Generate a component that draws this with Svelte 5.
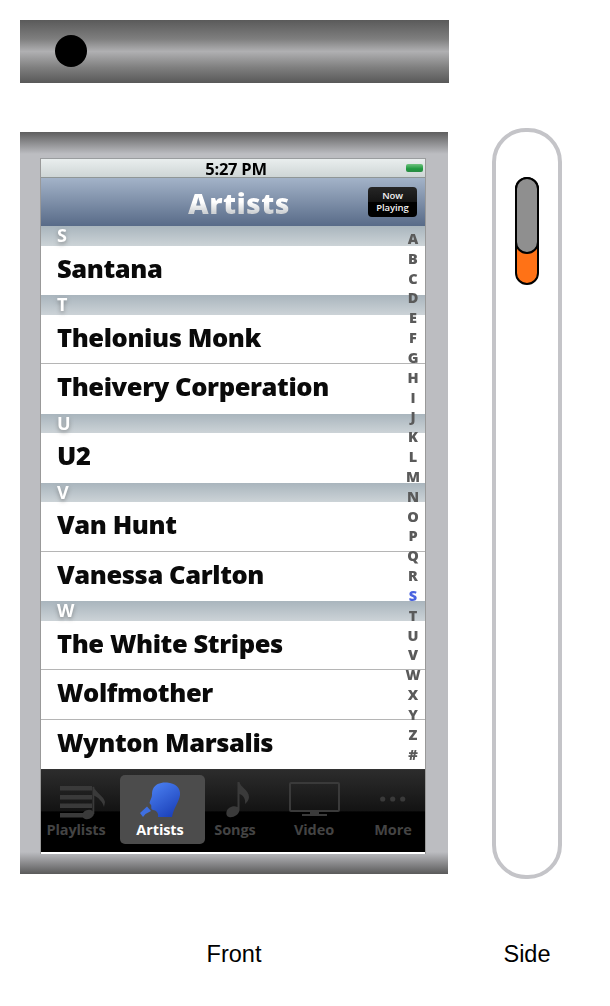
<script>
  const sections = [
    { l: 'S', rows: ['Santana'] },
    { l: 'T', rows: ['Thelonius Monk', 'Theivery Corperation'] },
    { l: 'U', rows: ['U2'] },
    { l: 'V', rows: ['Van Hunt', 'Vanessa Carlton'] },
    { l: 'W', rows: ['The White Stripes', 'Wolfmother', 'Wynton Marsalis'] }
  ];
  const index = 'ABCDEFGHIJKLMNOPQRSTUVWXYZ#'.split('');
</script>

<div class="page">
  <div class="top-edge"><span class="hole"></span></div>

  <div class="front">
    <div class="metal upper"></div>
    <div class="screen">
      <div class="status"><span>5:27 PM</span><i class="battery"></i></div>
      <div class="nav">
        <span class="title">Artists</span>
        <span class="now">Now<br />Playing</span>
      </div>
      <div class="list">
        {#each sections as s}
          <div class="head"><span>{s.l}</span></div>
          {#each s.rows as r, i}
            <div class="row" class:ruled={i < s.rows.length - 1}>{r}</div>
          {/each}
        {/each}
        <div class="index">
          {#each index as c}
            <span class:on={c === 'S'}>{c}</span>
          {/each}
        </div>
      </div>
      <div class="tabs">
        <div class="tab t1">
          <svg width="66" height="40" viewBox="0 0 66 40">
            <g fill="#3a3a3a">
              <rect x="17" y="6" width="32" height="4.5" />
              <rect x="17" y="15" width="32" height="4.5" />
              <rect x="17" y="23.5" width="32" height="4.5" />
              <rect x="17" y="33" width="24" height="4.5" />
              <ellipse cx="45" cy="34.5" rx="6" ry="4.5" transform="rotate(-20 45 34.5)" />
              <rect x="49.5" y="7" width="1.8" height="27" />
              <path d="M50 6 C53 13 61 16 62 22 L61 27 C60 22 55 17 50 15 Z" />
            </g>
          </svg>
          <b>Playlists</b>
        </div>
        <div class="tab t2">
          <svg width="46" height="40" viewBox="0 0 46 40">
            <defs>
              <linearGradient id="blue" x1="0.2" y1="0" x2="0.8" y2="1">
                <stop offset="0" stop-color="#4a7ff0" />
                <stop offset="1" stop-color="#1a3fb8" />
              </linearGradient>
            </defs>
            <path fill="url(#blue)" d="M16 9 C18 4 24 2 30 2.5 C38 3 44 8 43 15 C42 22 37 27 35 37 L21 37 C22 33 19 30 16 30 C13 29 15 26 14 25 L12.5 23 C13 20 15 18 15 15 C15 13 15 11 16 9 Z" />
            <path fill="#3f6fe0" d="M3 33 L10 26.5 L14 31 L8.5 34 L6 37 Z" />
          </svg>
          <b>Artists</b>
        </div>
        <div class="tab t3">
          <svg width="40" height="40" viewBox="0 0 40 40">
            <path fill="#3a3a3a" d="M22.5 2 L24.5 2 C25 7 34 10 34 17 C34 20 32 22 30 24 C31 19 28 15 24.5 14 L24.5 30 C24 35 18 38 14 37 C10 36 11 30 14 28 C17 26 20 26 22.5 27 Z" />
          </svg>
          <b>Songs</b>
        </div>
        <div class="tab t4">
          <svg width="54" height="40" viewBox="0 0 54 40">
            <rect x="3" y="3" width="49" height="28" rx="1" fill="none" stroke="#3a3a3a" stroke-width="2" />
            <path fill="#3a3a3a" d="M23 32 H32 V34 H40 V36 H15 V34 H23 Z" />
          </svg>
          <b>Video</b>
        </div>
        <div class="tab t5">
          <svg width="30" height="40" viewBox="0 0 30 40">
            <g fill="#3a3a3a">
              <circle cx="4.7" cy="19" r="2.6" />
              <circle cx="14.7" cy="19" r="2.6" />
              <circle cx="24.7" cy="19" r="2.6" />
            </g>
          </svg>
          <b>More</b>
        </div>
      </div>
    </div>
    <div class="metal lower"></div>
  </div>

  <div class="side">
    <div class="slider"><div class="thumb"></div></div>
  </div>

  <div class="label">Front</div>
  <div class="label">Side</div>
</div>

<style>
  :global(body) { margin: 0; background: #fff; }
  .page {
    width: 610px;
    height: 1006px;
    box-sizing: border-box;
    padding: 20px 0 0 20px;
    display: grid;
    grid-template-columns: 428px 70px;
    grid-template-rows: 63px 742px auto;
    column-gap: 44px;
    row-gap: 49px;
    font-family: "Liberation Sans", Arial, sans-serif;
    overflow: hidden;
  }
  .top-edge {
    grid-column: 1 / 3;
    width: 429px;
    height: 63px;
    box-sizing: border-box;
    padding: 15px 0 0 35px;
    background: linear-gradient(#5a5a5a 0%, #7e7e7e 30%, #b0b0b2 50%, #808080 75%, #585858 100%);
  }
  .hole {
    display: block;
    width: 32px;
    height: 32px;
    border-radius: 50%;
    background: #000;
  }
  .front {
    display: flex;
    flex-direction: column;
    background: #bcbdc1;
    align-items: flex-start;
  }
  .metal { height: 22px; width: 100%; flex: none; }
  .upper { background: linear-gradient(#5e5e5e, #bcbdc1); }
  .lower { background: linear-gradient(#bcbdc1, #5a5a5a); }
  .screen {
    margin: 4px 0 -2px 20px;
    width: 386px;
    height: 696px;
    box-sizing: border-box;
    border: 1px solid #999;
    border-bottom: 0;
    border-top: 1px solid #9a9d9f;
    display: flex;
    flex-direction: column;
    background: #fff;
    filter: blur(0.35px);
  }
  .status {
    flex: none;
    height: 19px;
    position: relative;
    text-align: center;
    font: 700 16.5px/20px "Open Sans", sans-serif;
    letter-spacing: -0.25px;
    color: #000;
    background: linear-gradient(#e9eeee, #cdd4d4);
    box-shadow: inset 0 -1px 0 #8f9696;
  }
  .status span { margin-left: 6px; }
  .battery {
    position: absolute;
    right: 2px;
    top: 5px;
    width: 17px;
    height: 8px;
    border-radius: 2px;
    background: linear-gradient(#6fc27f, #1f9a3f 60%, #2b8a45);
  }
  .nav {
    flex: none;
    height: 48px;
    position: relative;
    display: flex;
    align-items: center;
    justify-content: center;
    background: linear-gradient(#a3b3c8, #586b88);
  }
  .title {
    font: 800 28.5px/1 "Open Sans", sans-serif;
    letter-spacing: 0.4px;
    padding-top: 2px;
    margin-left: 12px;
    color: transparent;
    background: linear-gradient(#ffffff 50%, #cfd2d5 85%);
    -webkit-background-clip: text;
    background-clip: text;
    filter: drop-shadow(0 0 0.6px rgba(60, 70, 90, 0.5));
  }
  .now {
    position: absolute;
    right: 8px;
    top: 9px;
    width: 49px;
    height: 30px;
    border-radius: 4px;
    box-sizing: border-box;
    padding-top: 3px;
    text-align: center;
    color: #f2f2f2;
    font: 600 9.5px/12px "Open Sans", sans-serif;
    letter-spacing: -0.1px;
    background: linear-gradient(#262626 0%, #141414 50%, #000 50%, #000 100%);
  }
  .list { flex: none; position: relative; height: 543px; }
  .head {
    height: 19.7px;
    background: linear-gradient(#a9b5bd, #ccd3d7);
    box-sizing: border-box;
    padding-left: 16px;
    font: 700 18px/18px "Open Sans", sans-serif;
    color: #fff;
    position: relative;
  }
  .head span { text-shadow: 0 2px 4px rgba(80, 80, 80, 0.55); }
  .row {
    height: 49.4px;
    box-sizing: border-box;
    padding-left: 16px;
    font: 800 25.5px/44px "Open Sans", sans-serif;
    letter-spacing: -0.4px;
    color: #0a0a0a;
    background: #fff;
  }
  .row.ruled { border-bottom: 1px solid #b5b5b5; }
  .index {
    position: absolute;
    top: 3px;
    right: 3px;
    width: 18px;
    display: flex;
    flex-direction: column;
    align-items: center;
    font: 800 14.5px/19.83px "Open Sans", sans-serif;
    color: #5a5a5a;
  }
  .index .on { color: #4a63e0; }
  .tabs {
    flex: none;
    height: 83px;
    display: flex;
    box-sizing: border-box;
    padding: 5px 0 8px 0;
    background: linear-gradient(#2c2c2c 0%, #131313 50%, #000 51%, #000 100%);
    border-top: 1px solid #333;
  }
  .tab {
    display: flex;
    flex-direction: column;
    align-items: center;
    color: #444;
    flex: none;
  }
  .tab svg { margin-top: 5px; flex: none; }
  .tab b { font: 700 14.5px/17px "Open Sans", sans-serif; letter-spacing: -0.1px; margin-top: 1px; }
  .t1 { width: 70px; margin-right: 9px; }
  .t2 { width: 85px; box-sizing: border-box; padding-right: 5px; background: #4c4c4c; border-radius: 5px; color: #fff; }
  .t3 { width: 60px; }
  .t4 { width: 98px; }
  .t5 { width: 60px; }
  .side {
    margin-top: -4px;
    height: 751px;
    box-sizing: border-box;
    border: 4px solid #c4c4c8;
    border-radius: 34px;
    padding: 45px 0 0 19px;
  }
  .slider {
    width: 24px;
    height: 108px;
    box-sizing: border-box;
    border: 2px solid #000;
    border-radius: 12px;
    background: #ff7216;
  }
  .thumb {
    margin: -2px;
    height: 77px;
    box-sizing: border-box;
    background: #8f8f8f;
    border: 2px solid #000;
    border-radius: 12px;
  }
  .label {
    font-size: 23.5px;
    line-height: 28px;
    text-align: center;
    color: #000;
    margin-top: 17px;
  }
</style>
